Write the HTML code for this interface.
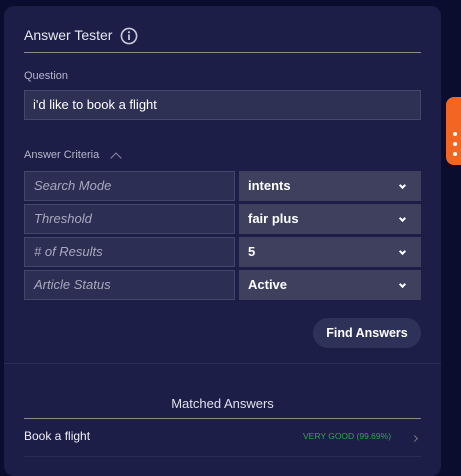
<!DOCTYPE html>
<html><head><style>
*{margin:0;padding:0;box-sizing:border-box}
body{width:461px;height:467px;background:#0b0d2f;font-family:"Liberation Sans",Roboto,sans-serif;position:relative;overflow:hidden;color:#e6e6ee}
.panel{position:absolute;left:4px;top:6px;width:437px;height:470px;background:#1c1e48;border-radius:10px}
.abs{position:absolute}
.tab{position:absolute;left:446px;top:97px;width:20px;height:68px;background:#f26522;border-radius:8px 0 0 8px}
.dot{position:absolute;left:453px;width:4px;height:4px;border-radius:50%;background:#fff}
.cellL{position:absolute;left:24px;width:211px;height:30px;background:#2c2e54;border:1px solid #44466a;font-style:italic;color:#a8a9bd;font-size:13px;padding-left:9px;line-height:28px}
.cellR{position:absolute;left:239px;width:182px;height:30px;background:#3e405e;color:#fff;font-weight:bold;font-size:13px;padding-left:9px;line-height:30px}
.chev{position:absolute;right:16px;top:12px;width:5px;height:5px;border-right:2px solid #fff;border-bottom:2px solid #fff;transform:rotate(45deg)}
</style></head><body>
<div class="panel"></div>
<div class="tab"></div>
<div class="dot" style="top:132px"></div>
<div class="dot" style="top:142px"></div>
<div class="dot" style="top:152px"></div>
<div class="abs" style="left:24px;top:27px;font-size:14px;color:#e8e8f0">Answer Tester</div>
<svg class="abs" style="left:120px;top:27px" width="18" height="18" viewBox="0 0 18 18"><circle cx="9" cy="9" r="7.6" fill="none" stroke="#c8c9d8" stroke-width="1.6"/><rect x="8.1" y="7.5" width="1.8" height="5.5" fill="#c8c9d8"/><circle cx="9" cy="5.2" r="1.1" fill="#c8c9d8"/></svg>
<div class="abs" style="left:24px;top:52px;width:397px;height:1px;background:#8c8a8a"></div>
<div class="abs" style="left:24px;top:70px;font-size:11px;color:#b5b6c8">Question</div>
<div class="abs" style="left:24px;top:90px;width:397px;height:30px;background:#2e3054;border:1px solid #45476c;font-size:13px;color:#fff;padding-left:8px;line-height:27px">i'd like to book a flight</div>
<div class="abs" style="left:24px;top:149px;font-size:11px;color:#b5b6c8">Answer Criteria</div>
<div class="abs" style="left:112px;top:154px;width:8px;height:8px;border-left:1.5px solid #8f90a8;border-top:1.5px solid #8f90a8;transform:rotate(45deg)"></div>
<div class="cellL" style="top:171px">Search Mode</div>
<div class="cellR" style="top:171px">intents<span class="chev"></span></div>
<div class="cellL" style="top:204px">Threshold</div>
<div class="cellR" style="top:204px">fair plus<span class="chev"></span></div>
<div class="cellL" style="top:237px"># of Results</div>
<div class="cellR" style="top:237px">5<span class="chev"></span></div>
<div class="cellL" style="top:270px">Article Status</div>
<div class="cellR" style="top:270px">Active<span class="chev"></span></div>
<div class="abs" style="left:313px;top:318px;width:108px;height:30px;background:#2f3258;border-radius:15px;color:#fff;font-weight:bold;font-size:12.5px;text-align:center;line-height:30px">Find Answers</div>
<div class="abs" style="left:4px;top:363px;width:437px;height:1px;background:#2a2c58"></div>
<div class="abs" style="left:24px;top:396px;width:397px;text-align:center;font-size:13px;color:#e0e0ea">Matched Answers</div>
<div class="abs" style="left:24px;top:418px;width:397px;height:1px;background:#8c8a8a"></div>
<div class="abs" style="left:24px;top:429px;font-size:12px;color:#f0f0f5">Book a flight</div>
<div class="abs" style="left:303px;top:431px;font-size:8.5px;color:#2ea84a">VERY GOOD (99.69%)</div>
<div class="abs" style="left:412px;top:436px;width:5px;height:5px;border-right:1px solid #777;border-top:1px solid #777;transform:rotate(45deg)"></div>
<div class="abs" style="left:24px;top:456px;width:397px;height:1px;background:#2c2e5a"></div>
</body></html>
